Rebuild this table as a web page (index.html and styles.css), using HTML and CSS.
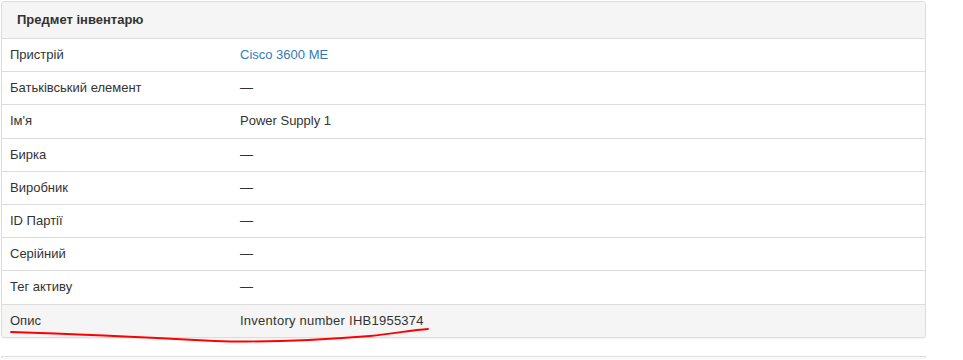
FILE: index.html
```html
<!DOCTYPE html>
<html>
<head>
<meta charset="utf-8">
<link rel="stylesheet" href="styles.css">
</head>
<body>
<div class="page">
  <div class="panel">
    <div class="panel-heading"><strong>Предмет інвентарю</strong></div>
    <table class="attr-table">
      <tr><td class="label">Пристрій</td><td><a href="#">Cisco 3600 ME</a></td></tr>
      <tr><td class="label">Батьківський елемент</td><td>—</td></tr>
      <tr><td class="label">Ім'я</td><td>Power Supply 1</td></tr>
      <tr><td class="label">Бирка</td><td>—</td></tr>
      <tr><td class="label">Виробник</td><td>—</td></tr>
      <tr><td class="label">ID Партії</td><td>—</td></tr>
      <tr><td class="label">Серійний</td><td>—</td></tr>
      <tr><td class="label">Тег активу</td><td>—</td></tr>
      <tr class="hover"><td class="label">Опис</td><td class="desc">Inventory number IHB1955374</td></tr>
    </table>
  </div>
  <div class="panel panel-next"></div>
  <svg class="scribble" width="440" height="360" viewBox="0 0 440 360">
    <path d="M11 332 C 80 334, 160 338, 215 341 C 260 342.5, 320 340, 370 336 C 395 333.5, 412 330, 428 329" fill="none" stroke="#ff0000" stroke-width="1.8" stroke-linecap="round"/>
  </svg>
</div>
</body>
</html>
```
FILE: styles.css
```css
html, body {
  margin: 0;
  padding: 0;
  background: #fff;
}
body {
  font-family: "Liberation Sans", Arial, sans-serif;
  font-size: 13px;
  color: #333;
  overflow: hidden;
  height: 360px;
}
.page {
  position: relative;
  padding: 1px 0 0 1px;
  width: 925px;
}
.panel {
  border: 1px solid #ddd;
  border-radius: 3px;
  background: #fff;
  box-shadow: 0 1px 1px rgba(0,0,0,0.05);
  margin-bottom: 18px;
  overflow: hidden;
}
.panel-heading {
  background: #f5f5f5;
  border-bottom: 1px solid #ddd;
  padding: 9px 15px;
  line-height: 18px;
  color: #333;
}
.attr-table {
  width: 100%;
  border-collapse: collapse;
  table-layout: fixed;
}
.attr-table td {
  padding: 7px 8px;
  line-height: 18.2px;
  border-top: 1px solid #ddd;
  vertical-align: top;
}
.attr-table tr:first-child td {
  border-top: 0;
}
.attr-table td.label {
  width: 214px;
}
.attr-table td.desc {
  letter-spacing: 0.25px;
}
.attr-table tr.hover td {
  background: #f5f5f5;
}
a {
  color: #337ab7;
  text-decoration: none;
}
.panel-next {
  height: 1px;
  margin-bottom: 0;
  border-bottom: 0;
}
.scribble {
  position: absolute;
  left: 0;
  top: 0;
  pointer-events: none;
}
```
